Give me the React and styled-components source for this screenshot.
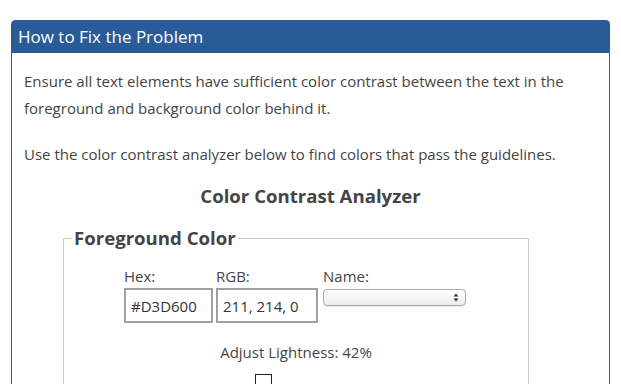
import React from 'react'
import styled, { createGlobalStyle } from 'styled-components'

const Global = createGlobalStyle`
    body {
        margin      : 0;
        background  : #fff;
        font-family : "Open Sans", "DejaVu Sans", sans-serif;
        color       : #444;
    }
`

const Panel = styled.section`
    margin        : 20px 13px 0 11px;
    width         : 597px;
    border        : 1px solid #2a5b99;
    border-radius : 4px 4px 0 0;
`

const Header = styled.h3`
    margin      : 0;
    height      : 32px;
    padding     : 0 6px;
    background  : #2a5b99;
    color       : #fff;
    font-size   : 17px;
    font-weight : 400;
    line-height : 32px;
`

const Body = styled.div`
    padding : 15px 12px 0;

    p {
        margin      : 0 0 19px;
        font-size   : 15px;
        line-height : 27px;

        &:last-of-type {
            margin-bottom : 14px;
        }
    }
`

const Title = styled.h4`
    margin      : 0 0 18px;
    text-align  : center;
    font-size   : 18.6px;
    font-weight : 700;
    line-height : 27px;
`

const Fieldset = styled.fieldset`
    margin        : 0 0 0 39px;
    width         : 466px;
    box-sizing    : border-box;
    padding       : 0 8px 10px 60px;
    border        : 1px solid #ccc;
    border-bottom : none;

    legend {
        margin-left : -52px;
        padding     : 0 2px;
        font-size   : 18.6px;
        font-weight : 700;
        line-height : 22px;
    }
`

const FieldRow = styled.div`
    display     : flex;
    align-items : flex-start;
    gap         : 3px;
    margin-top  : 17px;
`

const Field = styled.label`
    display        : flex;
    flex-direction : column;
    gap            : 2px;
    font-size      : 15px;
    line-height    : 20px;
    margin-left    : ${p => p.$gap || 0}px;
`

const Input = styled.input`
    width       : ${p => p.$w}px;
    height      : 35px;
    box-sizing  : border-box;
    margin      : 0;
    padding     : 0 5px;
    border      : 2px solid #a0a0a0;
    font-family : inherit;
    font-size   : 15px;
    color       : #333;
`

const Select = styled.div`
    position      : relative;
    width         : 143px;
    height        : 17px;
    margin-top    : 1px;
    box-sizing    : border-box;
    border        : 1px solid #aaa;
    border-radius : 4px;
    background    : linear-gradient(#fff, #ececec);
    box-shadow    : 0 1px 1px rgba(0, 0, 0, 0.08);

    svg {
        position : absolute;
        right    : 6px;
        top      : 3px;
    }
`

const Lightness = styled.div`
    margin       : 17px 0 0 -52px;
    text-align   : center;
    font-size    : 15px;
    line-height  : 24px;
`

const Thumb = styled.div`
    width       : 15px;
    height      : 15px;
    margin      : 10px 0 0 131px;
    border      : 1px solid #222;
    background  : #fff;
`

export default function App() {
    return (
        <>
            <Global />
            <Panel>
                <Header>How to Fix the Problem</Header>
                <Body>
                    <p>Ensure all text elements have sufficient color contrast between the text in the foreground and background color behind it.</p>
                    <p>Use the color contrast analyzer below to find colors that pass the guidelines.</p>
                    <Title>Color Contrast Analyzer</Title>
                    <Fieldset>
                        <legend>Foreground Color</legend>
                        <FieldRow>
                            <Field>
                                Hex:
                                <Input $w={89} defaultValue="#D3D600" />
                            </Field>
                            <Field>
                                RGB:
                                <Input $w={102} defaultValue="211, 214, 0" />
                            </Field>
                            <Field $gap={2}>
                                Name:
                                <Select>
                                    <svg width="6" height="9" viewBox="0 0 6 9">
                                        <path d="M3 0.5 L5.5 3.5 H0.5 Z M3 8.5 L5.5 5.5 H0.5 Z" fill="#333" />
                                    </svg>
                                </Select>
                            </Field>
                        </FieldRow>
                        <Lightness>Adjust Lightness: 42%</Lightness>
                        <Thumb />
                    </Fieldset>
                </Body>
            </Panel>
        </>
    )
}
